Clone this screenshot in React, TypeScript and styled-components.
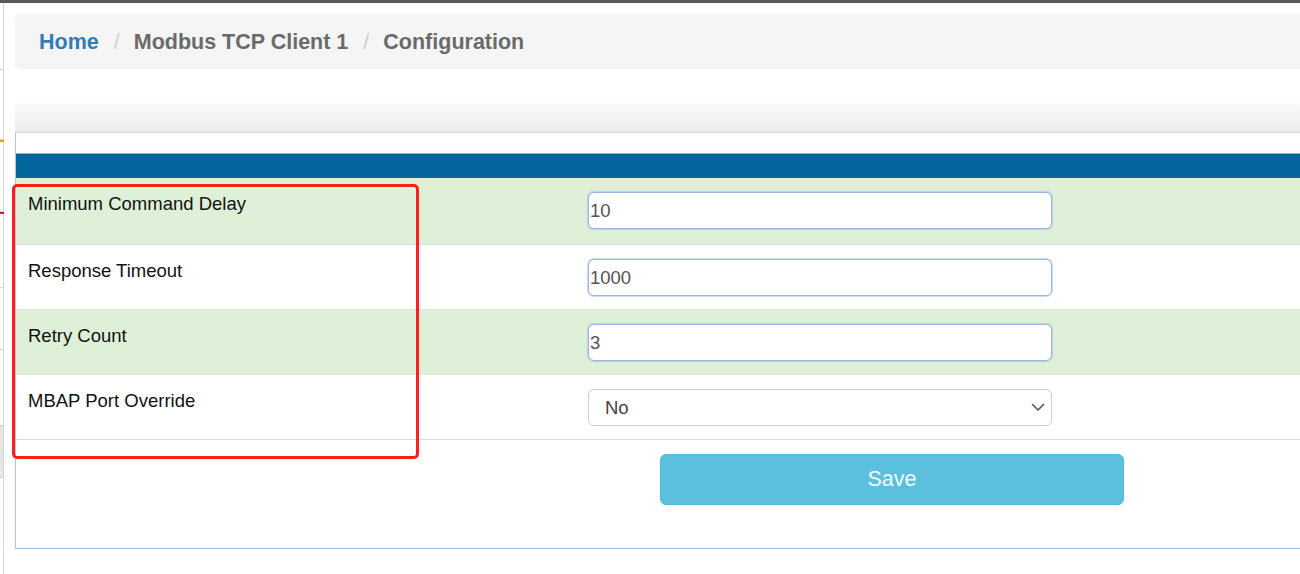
import React from "react";
import styled, { createGlobalStyle } from "styled-components";

const Global = createGlobalStyle`
  html, body { margin: 0; padding: 0; background: #fff; overflow: hidden; }
  body { font-family: "Liberation Sans", Arial, sans-serif; }
  * { box-sizing: border-box; }
`;

const Page = styled.div`
  position: relative;
  width: 1300px;
  height: 574px;
  overflow: hidden;
  display: flex;
  flex-direction: column;
`;

const TopBar = styled.div`
  height: 3px;
  background: #5a5a5a;
  flex: none;
`;

const Body = styled.div`
  display: flex;
  flex: 1;
`;

const Rail = styled.div`
  width: 4px;
  flex: none;
  border-right: 1px solid #d4d4d4;
  display: flex;
  flex-direction: column;
`;

const RailItem = styled.div<{ $h: number; $mark?: string; $bg?: string }>`
  height: ${(p) => p.$h}px;
  border-bottom: 1px solid #d6d6d6;
  background: ${(p) => p.$bg || "transparent"};
  position: relative;
  &::after {
    content: "";
    display: ${(p) => (p.$mark ? "block" : "none")};
    position: absolute;
    left: 0;
    right: -1px;
    bottom: -3px;
    height: 2px;
    background: ${(p) => p.$mark};
  }
`;

const Main = styled.div`
  flex: 1;
  padding-left: 11px;
  margin-right: -40px;
  display: flex;
  flex-direction: column;
`;

const Breadcrumb = styled.nav`
  margin-top: 11px;
  height: 55px;
  background: #f5f5f5;
  border-radius: 5px;
  display: flex;
  align-items: center;
  padding-left: 24px;
  padding-top: 2px;
  font-size: 21.5px;
  font-weight: 700;
  line-height: 1.2;
`;

const Crumb = styled.span<{ $link?: boolean }>`
  color: ${(p) => (p.$link ? "#337ab7" : "#6a6a6a")};
`;

const Sep = styled.span`
  color: #cfcfcf;
  font-weight: 400;
  margin: 0 14px 0 15px;
`;

const Panel = styled.section`
  margin-top: 34px;
  display: flex;
  flex-direction: column;
`;

const PanelHeading = styled.div`
  height: 30px;
  background: linear-gradient(to bottom, #fbfbfb 0%, #ececec 100%);
  border-bottom: 1px solid #dadada;
`;

const PanelBody = styled.div`
  border-left: 1px solid #aec5e4;
  border-bottom: 1px solid #a8c0e2;
  padding-top: 20px;
  height: 416px;
`;

const TableHead = styled.div`
  height: 25px;
  background: #03669c;
  border-top: 1px solid #8fb3cc;
`;

const Table = styled.div`
  display: flex;
  flex-direction: column;
  border-bottom: 1px solid #dcdcdc;
`;

const Row = styled.div<{ $success?: boolean }>`
  display: grid;
  grid-template-columns: 560px 1fr;
  height: 65px;
  border-top: 1px solid #e2e2e2;
  background: ${(p) => (p.$success ? "#dff0d8" : "#fff")};
  &:first-child { border-top: none; height: 66px; }
`;

const LabelCell = styled.div`
  padding: 15px 12px 0;
  font-size: 18.5px;
  line-height: 22px;
  color: #111;
`;

const FieldCell = styled.div`
  padding: 14px 12px 0;
`;

const TextInput = styled.input`
  width: 464px;
  height: 37px;
  border: 1px solid #9db5dc;
  box-shadow: 0 0 1px 1px rgba(160, 185, 225, 0.55);
  border-radius: 6px;
  padding: 0 1px;
  font-family: "Liberation Sans", Arial, sans-serif;
  font-size: 18.5px;
  color: #555;
  background: #fff;
  outline: none;
`;

const SelectBox = styled.div`
  width: 464px;
  height: 37px;
  border: 1px solid #cfcfcf;
  border-radius: 6px;
  background: #fff;
  display: flex;
  align-items: center;
  justify-content: space-between;
  padding: 0 6px 0 16px;
  font-size: 18.5px;
  color: #444;
`;

const ButtonRow = styled.div`
  display: grid;
  grid-template-columns: 560px 1fr;
  padding-top: 14px;
`;

const SaveButton = styled.button`
  grid-column: 2;
  margin-left: 84px;
  width: 464px;
  height: 51px;
  border: 1px solid #52b9d8;
  border-radius: 6px;
  background: #5bc0de;
  color: #f2fbff;
  font-family: "Liberation Sans", Arial, sans-serif;
  font-size: 21.5px;
  cursor: pointer;
`;

const Annotation = styled.div`
  position: absolute;
  left: 12px;
  top: 184px;
  width: 407px;
  height: 275px;
  border: 3px solid #ff1f1f;
  border-radius: 5px;
  pointer-events: none;
`;

const Chevron = () => (
  <svg width="14" height="9" viewBox="0 0 14 9" fill="none">
    <path d="M1.5 1.5 L7 7 L12.5 1.5" stroke="#555" strokeWidth="1.6" strokeLinecap="round" strokeLinejoin="round" />
  </svg>
);

const rows = [
  { label: "Minimum Command Delay", value: "10", success: true },
  { label: "Response Timeout", value: "1000", success: false },
  { label: "Retry Count", value: "3", success: true },
];

export default function App() {
  return (
    <>
      <Global />
      <Page>
        <TopBar />
        <Body>
          <Rail>
            <RailItem $h={67} />
            <RailItem $h={70} $mark="#e0a020" />
            <RailItem $h={72} $mark="#d02020" />
            <RailItem $h={76} />
            <RailItem $h={62} />
            <RailItem $h={76} />
            <RailItem $h={52} $bg="#e6e6e6" />
          </Rail>
          <Main>
            <Breadcrumb>
              <Crumb $link>Home</Crumb>
              <Sep>/</Sep>
              <Crumb>Modbus TCP Client 1</Crumb>
              <Sep>/</Sep>
              <Crumb>Configuration</Crumb>
            </Breadcrumb>
            <Panel>
              <PanelHeading />
              <PanelBody>
                <TableHead />
                <Table>
                  {rows.map((r) => (
                    <Row key={r.label} $success={r.success}>
                      <LabelCell>{r.label}</LabelCell>
                      <FieldCell>
                        <TextInput defaultValue={r.value} />
                      </FieldCell>
                    </Row>
                  ))}
                  <Row>
                    <LabelCell>MBAP Port Override</LabelCell>
                    <FieldCell>
                      <SelectBox>
                        <span>No</span>
                        <Chevron />
                      </SelectBox>
                    </FieldCell>
                  </Row>
                </Table>
                <ButtonRow>
                  <SaveButton>Save</SaveButton>
                </ButtonRow>
              </PanelBody>
            </Panel>
          </Main>
        </Body>
        <Annotation />
      </Page>
    </>
  );
}
